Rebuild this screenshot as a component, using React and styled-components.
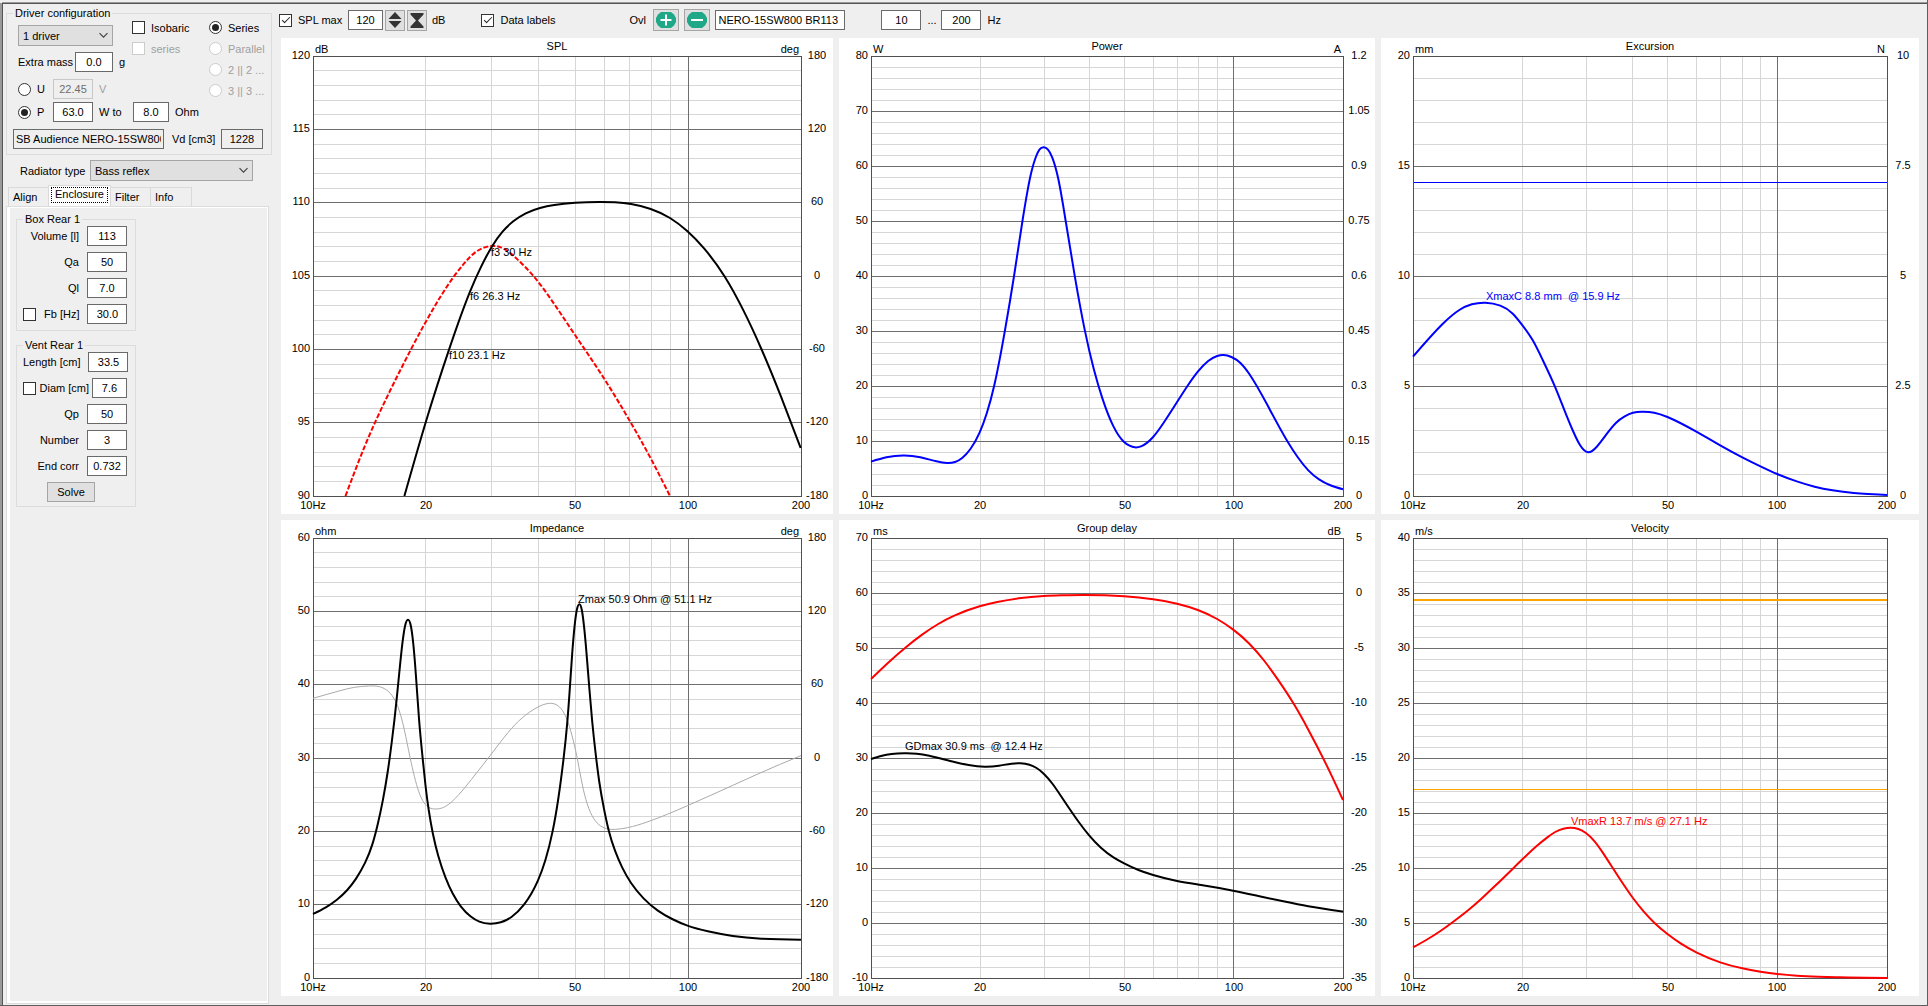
import React, { useLayoutEffect, useRef, useState } from "react";
import styled, { createGlobalStyle, css } from "styled-components";

const FONT = '"Liberation Sans", Arial, sans-serif';
const FONT_SIZE = 11;
const FACE = "#efefef";

const GlobalStyle = createGlobalStyle`
  *, *::before, *::after { box-sizing: border-box; }
  body { margin: 0; background: ${FACE}; }
  body, button, input, select, fieldset {
    font-family: ${FONT};
    font-size: ${FONT_SIZE}px;
    line-height: 14px;
    color: #000;
  }
`;

/* ---------- window ---------- */

const Window = styled.main`
  display: flex;
  height: 100vh;
  min-height: 600px;
  border: solid #5f5f5f;
  border-width: 0 1px 1px 0;
`;

const Frame = styled.div`
  flex: 1;
  min-width: 0;
  display: flex;
  margin-top: 3px;
  border: solid #555;
  border-width: 1px 0 0 1px;
  box-shadow: -2px 0 0 #9a9a9a, 0 -1px 0 #9a9a9a;
  margin-left: 2px;
  padding-top: 1px;
`;

const Sidebar = styled.aside`
  flex: none;
  width: 270px;
  padding: 1px 0 1px 3px;
  display: flex;
  flex-direction: column;
`;

const Workspace = styled.section`
  flex: 1;
  min-width: 0;
  display: flex;
  flex-direction: column;
  padding: 0 8px 9px 6px;
`;

/* ---------- controls ---------- */

const Group = styled.fieldset`
  min-width: 0;
  margin: 0;
  border: 1px solid #dcdcdc;
  padding: ${(p) => p.$pad || "0 8px 6px 6px"};
  display: flex;
  flex-direction: column;
  width: ${(p) => (p.$width ? `${p.$width}px` : "auto")};
`;

const Legend = styled.legend`
  padding: 0 2px;
`;

const Row = styled.div`
  display: flex;
  align-items: center;
  gap: ${(p) => p.$gap ?? 6}px;
  margin-top: ${(p) => p.$top || 0}px;
`;

const Column = styled.div`
  flex: none;
  align-self: flex-start;
  display: flex;
  flex-direction: column;
  width: ${(p) => (p.$width ? `${p.$width}px` : "auto")};
  gap: ${(p) => p.$gap || 0}px;
  padding-top: ${(p) => p.$top || 0}px;
`;

const Field = styled.input`
  flex: none;
  width: ${(p) => p.$width}px;
  height: 20px;
  padding: 0 2px;
  border: 1px solid #6a6a6a;
  border-radius: 0;
  background: ${(p) => (p.readOnly ? FACE : "#fff")};
  text-align: ${(p) => p.$align || "center"};
  &:disabled {
    border-color: #c8c8c8;
    background: ${FACE};
    color: #6d6d6d;
  }
`;

const Text = styled.label`
  flex: none;
  white-space: nowrap;
  color: ${(p) => (p.$dim ? "#a0a0a0" : "#000")};
  width: ${(p) => (p.$width ? `${p.$width}px` : "auto")};
`;

const RowLabel = styled.label`
  flex: 1;
  text-align: right;
  white-space: nowrap;
`;

const tick = css`
  appearance: none;
  flex: none;
  width: 13px;
  height: 13px;
  margin: 0;
  display: grid;
  place-items: center;
  border: 1px solid #333;
  background: #fff;
  &:disabled { border-color: #ccc; }
`;

const Check = styled.input.attrs({ type: "checkbox" })`
  ${tick}
  &:checked::before {
    content: "";
    width: 8px;
    height: 4px;
    margin-bottom: 3px;
    border: solid #222;
    border-width: 0 0 1px 1px;
    transform: rotate(-45deg);
  }
`;

const Radio = styled.input.attrs({ type: "radio" })`
  ${tick}
  border-radius: 50%;
  &:checked::before {
    content: "";
    width: 7px;
    height: 7px;
    border-radius: 50%;
    background: #222;
  }
`;

const Option = styled.label`
  display: flex;
  align-items: center;
  gap: 6px;
  height: 15px;
  white-space: nowrap;
  color: ${(p) => (p.$dim ? "#a0a0a0" : "#000")};
`;

const SelectBox = styled.div`
  display: grid;
  align-items: center;
  width: ${(p) => p.$width}px;
  > * { grid-area: 1 / 1; }
  > svg { justify-self: end; margin-right: 4px; pointer-events: none; }
`;

const Select = styled.select`
  appearance: none;
  width: 100%;
  height: 21px;
  padding: 0 20px 0 4px;
  border: 1px solid #a5a5a5;
  border-radius: 0;
  background: #e0e0e0;
`;

const Button = styled.button`
  flex: none;
  display: grid;
  place-items: center;
  width: ${(p) => p.$width}px;
  height: ${(p) => p.$height || 20}px;
  padding: 0;
  border: 1px solid #a5a5a5;
  border-radius: 0;
  background: #e0e0e0;
`;

const SolveButton = styled(Button)`
  margin: 6px 0 -2px 24px;
`;

/* ---------- tabs ---------- */

const TabStrip = styled.div`
  display: flex;
  align-items: flex-end;
  height: 21px;
  margin-top: 4px;
  padding-left: 3px;
`;

const Tab = styled.button`
  width: ${(p) => p.$width}px;
  height: ${(p) => (p.$active ? 21 : 19)}px;
  padding: ${(p) => (p.$active ? "1px 2px 3px" : "0 0 0 4px")};
  margin-left: -1px;
  border: 1px solid #d9d9d9;
  border-bottom: 0;
  background: ${(p) => (p.$active ? "#fff" : FACE)};
  text-align: left;
  > span { display: block; }
  ${(p) =>
    p.$active &&
    css`
      > span { height: 16px; line-height: 13px; border: 1px dotted #000; padding-left: 3px; }
    `}
`;

const TabPane = styled.div`
  flex: 1;
  width: 263px;
  padding: 5px 9px;
  border: 1px solid #dcdcdc;
  box-shadow: inset 3px 1px 0 #fff, inset -1px -2px 0 #fff;
  display: flex;
  flex-direction: column;
  gap: 7px;
`;

/* ---------- toolbar and charts ---------- */

const Toolbar = styled.div`
  display: flex;
  align-items: center;
  height: 33px;
  padding-bottom: 3px;
`;

const ToolSet = styled.div`
  display: flex;
  align-items: center;
  gap: ${(p) => p.$gap || 5}px;
  margin-right: ${(p) => p.$after || 0}px;
`;

const ChartGrid = styled.div`
  flex: 1;
  min-height: 0;
  margin-left: 2px;
  display: grid;
  grid-template-columns: 552fr 536fr 538fr;
  grid-template-rows: 1fr 1fr;
  gap: 6px;
`;

const ChartPanel = styled.figure`
  min-width: 0;
  min-height: 0;
  margin: 0;
  overflow: hidden;
  background: #fff;
`;

const Plot = styled.svg`
  display: block;
  font-family: ${FONT};
  font-size: ${FONT_SIZE}px;
  text { white-space: pre; }
`;

const DriverInset = styled.div`
  padding-left: 5px;
`;

const RadiatorRow = styled(Row)`
  padding-left: 14px;
`;

const ToolOption = styled(Option)`
  width: ${(p) => p.$width}px;
`;

const UnitText = styled(Text)`
  margin-left: 3px;
`;

/* ---------- chart data ---------- */

/* Curves are stored in sheet units; each sheet names the edges of its plot area. */
const SHEET = {
  a: { x0: 94, x1: 1461, y0: 79, y1: 1399 },
  b: { x0: 117, x1: 1437, y0: 79, y1: 1399 },
  c: { x0: 123, x1: 1453, y0: 79, y1: 1399 },
  d: { x0: 94, x1: 1461, y0: 97, y1: 1417 },
  e: { x0: 117, x1: 1437, y0: 97, y1: 1417 },
  f: { x0: 123, x1: 1453, y0: 97, y1: 1417 },
};

const CHARTS = [
  {
    title: "SPL",
    sheet: SHEET.a,
    unitLeft: "dB",
    unitRight: "deg",
    left: ["120", "115", "110", "105", "100", "95", "90"],
    right: ["180", "120", "60", "0", "-60", "-120", "-180"],
    curves: [
      {
        color: "#f00",
        dash: "5 2",
        points: [185,1399,240,1247,300,1105,370,956,407,882,450,803,489,740,520,698,550,667,575,653,598,649,620,653,650,673,680,703,720,750,760,808,828,916,909,1046,982,1175,1041,1288,1094,1399],
      },
      {
        color: "#000",
        points: [350,1399,410,1177,476,957,535,783,565,711,595,651,625,606,655,575,690,551,730,535,770,526,828,519.5,895,517,940,518,985,523,1040,538,1094,565,1143,605,1190,657,1248,742,1300,843,1350,958,1405,1101,1460,1255],
      },
    ],
    notes: [
      { text: "f3 30 Hz", x: 594, y: 678 },
      { text: "f6 26.3 Hz", x: 535, y: 810 },
      { text: "f10 23.1 Hz", x: 476, y: 987 },
    ],
  },
  {
    title: "Power",
    sheet: SHEET.b,
    unitLeft: "W",
    unitRight: "A",
    left: ["80", "70", "60", "50", "40", "30", "20", "10", "0"],
    right: ["1.2", "1.05", "0.9", "0.75", "0.6", "0.45", "0.3", "0.15", "0"],
    curves: [
      {
        color: "#00f",
        points: [117,1296,160,1283,210,1277.5,255,1283,300,1295,330,1300,352,1297,372,1285,395,1258,421,1208,441,1150,462,1066,492,900,517,739,541,571,555,482,566,425,578,382,588,360,600,353,612,360,624,384,641,449,661,571,687,740,715,902,740,1018,765,1109,795,1190,824,1236,840,1248,855,1253,872,1250,906,1222,935,1180,973,1117,1002,1069,1031,1026,1060,994,1085,979,1103,976,1125,982,1150,1000,1175,1033,1226,1127,1281,1234,1310,1282,1340,1322,1370,1349,1400,1366,1437,1379],
      },
    ],
  },
  {
    title: "Excursion",
    sheet: SHEET.c,
    unitLeft: "mm",
    unitRight: "N",
    left: ["20", "15", "10", "5", "0"],
    right: ["10", "7.5", "5", "2.5", "0"],
    limits: [{ y: 458, color: "#00f", width: 1 }],
    curves: [
      {
        color: "#00f",
        points: [123,981,206,883,253,841,288,824,326,819,368,828,403,852,428,884,459,932,487,991,521,1070,548,1142,572,1204,592,1247,614,1268,638,1252,665,1215,693,1179,717,1160,740,1149,768,1146,800,1149,837,1162,918,1206,985,1247,1047,1283,1098,1310,1145,1333,1200,1355,1250,1371,1300,1382,1360,1390,1400,1393,1453,1396],
      },
    ],
    notes: [{ text: "XmaxC 8.8 mm  @ 15.9 Hz", x: 329, y: 810, color: "#00f" }],
  },
  {
    title: "Impedance",
    sheet: SHEET.d,
    unitLeft: "ohm",
    unitRight: "deg",
    left: ["60", "50", "40", "30", "20", "10", "0"],
    right: ["180", "120", "60", "0", "-60", "-120", "-180"],
    curves: [
      {
        color: "#aaa",
        width: 1,
        points: [94,578,130,567,170,555,210,545,250,541,280,543,300,553,320,577,335,613,350,673,366,756,378,812,390,857,405,891,420,906,438,910,460,905,485,886,520,845,555,798,590,750,620,708,660,657,700,620,730,601,757,593,780,600,797,622,810,655,823,704,836,768,848,835,862,894,880,938,900,961,920,970,942,971,975,966,1030,949,1143,900,1270,839,1400,777,1461,750],
      },
      {
        color: "#000",
        points: [94,1225,130,1205,160,1183,190,1153,215,1118,240,1071,260,1017,275,957,290,882,304,793,315,706,328,584,337,487,345,408,352,360,360,342,368,360,375,415,383,520,391,640,401,756,409,838,418,912,430,985,445,1051,465,1115,485,1163,508,1202,535,1232,560,1248,590,1254,620,1250,650,1234,685,1197,705,1165,724,1125,745,1063,765,978,781,880,796,758,806,654,813,555,820,445,827,359,833,313,840,296,847,313,853,360,860,440,868,547,876,646,886,746,896,829,909,909,922,973,940,1035,960,1085,985,1132,1020,1178,1060,1215,1100,1240,1143,1260,1200,1277,1270,1291,1350,1299,1400,1301,1461,1302],
      },
    ],
    notes: [{ text: "Zmax 50.9 Ohm @ 51.1 Hz", x: 837, y: 291 }],
  },
  {
    title: "Group delay",
    sheet: SHEET.e,
    unitLeft: "ms",
    unitRight: "dB",
    left: ["70", "60", "50", "40", "30", "20", "10", "0", "-10"],
    right: ["5", "0", "-5", "-10", "-15", "-20", "-25", "-30", "-35"],
    curves: [
      {
        color: "#f00",
        points: [117,520,165,471,213,426,260,387,305,355,350,330,421,302,470,289,530,278,600,271,650,269,710,268,770,269,825,272,906,281,973,294,1031,313,1085,340,1130,372,1175,414,1215,463,1255,522,1300,596,1340,672,1390,776,1437,883],
      },
      {
        color: "#000",
        points: [117,760,145,751,175,745,210,743,245,744,280,750,350,769,390,778,435,783,475,780,510,774,535,773,560,777,580,787,600,804,625,835,650,874,700,952,727,989,760,1026,795,1055,825,1073,865,1093,906,1108,973,1126,1040,1138,1130,1155,1200,1171,1270,1187,1340,1202,1437,1218],
      },
    ],
    notes: [{ text: "GDmax 30.9 ms  @ 12.4 Hz", x: 213, y: 734 }],
  },
  {
    title: "Velocity",
    sheet: SHEET.f,
    unitLeft: "m/s",
    left: ["40", "35", "30", "25", "20", "15", "10", "5", "0"],
    limits: [
      { y: 283, color: "#ffa500", width: 2 },
      { y: 850, color: "#ffa500", width: 1 },
    ],
    curves: [
      {
        color: "#f00",
        points: [123,1325,160,1303,200,1276,235,1249,275,1216,315,1179,355,1139,430,1061,470,1021,500,995,522,979,545,969,565,966,587,970,608,982,630,1004,655,1040,684,1088,738,1174,770,1217,800,1251,837,1285,875,1314,918,1340,985,1370,1047,1388,1098,1398,1145,1405,1200,1410,1260,1413,1320,1415,1453,1417],
      },
    ],
    notes: [{ text: "VmaxR 13.7 m/s @ 27.1 Hz", x: 565, y: 957, color: "#f00" }],
  },
];

/* Natural cubic spline through x-sorted points, as Bezier pieces. */
function smoothPath(pts) {
  const n = pts.length;
  const h = [];
  const s = [];
  for (let i = 0; i < n - 1; i++) {
    h.push(pts[i + 1][0] - pts[i][0]);
    s.push((pts[i + 1][1] - pts[i][1]) / h[i]);
  }
  const c = [0];
  const r = [0];
  for (let i = 1; i < n - 1; i++) {
    const m = 2 * (h[i - 1] + h[i]) - h[i - 1] * c[i - 1];
    c.push(h[i] / m);
    r.push((6 * (s[i] - s[i - 1]) - h[i - 1] * r[i - 1]) / m);
  }
  const bend = new Array(n).fill(0);
  for (let i = n - 2; i > 0; i--) bend[i] = r[i] - c[i] * bend[i + 1];

  let d = `M${pts[0][0].toFixed(2)} ${pts[0][1].toFixed(2)}`;
  for (let i = 0; i < n - 1; i++) {
    const [xa, ya] = pts[i];
    const [xb, yb] = pts[i + 1];
    const ta = s[i] - (h[i] * (2 * bend[i] + bend[i + 1])) / 6;
    const tb = s[i] + (h[i] * (bend[i] + 2 * bend[i + 1])) / 6;
    const k = h[i] / 3;
    d += `C${[xa + k, ya + ta * k, xb - k, yb - tb * k, xb, yb].map((v) => v.toFixed(2)).join(" ")}`;
  }
  return d;
}

const FREQ_LINES = [20, 30, 40, 50, 60, 70, 80, 90, 100];
const FREQ_LABELS = [[10, "10Hz"], [20, "20"], [50, "50"], [100, "100"], [200, "200"]];

function Chart({ title, sheet, unitLeft, unitRight, left, right = [], curves, limits = [], notes = [] }) {
  const box = useRef(null);
  const [size, setSize] = useState({ w: 540, h: 470 });

  useLayoutEffect(() => {
    const el = box.current;
    const measure = () => setSize({ w: el.clientWidth, h: el.clientHeight });
    measure();
    const observer = new ResizeObserver(measure);
    observer.observe(el);
    return () => observer.disconnect();
  }, []);

  const L = 32;
  const T = 18;
  const R = size.w - 32;
  const B = size.h - 18;
  const fx = (hz) => L + ((R - L) * Math.log(hz / 10)) / Math.log(20);
  const sx = (x) => L + ((x - sheet.x0) / (sheet.x1 - sheet.x0)) * (R - L);
  const sy = (y) => T + ((y - sheet.y0) / (sheet.y1 - sheet.y0)) * (B - T);
  const crisp = (v) => Math.floor(v) + 0.5;
  const majors = left.length - 1;
  const lines = Array.from({ length: majors * 5 - 1 }, (_, i) => i + 1);
  const rowY = (i) => T + ((B - T) * i) / majors;

  return (
    <ChartPanel ref={box}>
      <Plot width={size.w} height={size.h} role="img" aria-label={title}>
        <g shapeRendering="crispEdges" fill="none" strokeWidth="1">
          {lines.filter((i) => i % 5).map((i) => (
            <line key={i} x1={L} x2={R} y1={crisp(rowY(i / 5))} y2={crisp(rowY(i / 5))} stroke="#d6d6d6" />
          ))}
          {FREQ_LINES.map((hz) => (
            <line key={hz} y1={T} y2={B} x1={crisp(fx(hz))} x2={crisp(fx(hz))} stroke={hz === 100 ? "#6e6e6e" : "#d6d6d6"} />
          ))}
          {lines.filter((i) => i % 5 === 0).map((i) => (
            <line key={i} x1={L} x2={R} y1={crisp(rowY(i / 5))} y2={crisp(rowY(i / 5))} stroke="#6e6e6e" />
          ))}
          <rect x={L + 0.5} y={T + 0.5} width={Math.max(0, R - L)} height={Math.max(0, B - T)} stroke="#505050" />
          {limits.map((l) => (
            <line key={l.y} x1={L + 1} x2={R} y1={Math.round(sy(l.y)) + (l.width % 2) / 2} y2={Math.round(sy(l.y)) + (l.width % 2) / 2} stroke={l.color} strokeWidth={l.width} />
          ))}
        </g>
        {curves.map((c, k) => {
          const pts = [];
          for (let i = 0; i < c.points.length; i += 2) pts.push([sx(c.points[i]), sy(c.points[i + 1])]);
          return <path key={k} d={smoothPath(pts)} fill="none" stroke={c.color} strokeWidth={c.width || 2} strokeDasharray={c.dash} />;
        })}
        <text x={(L + R) / 2} y={12} textAnchor="middle">{title}</text>
        <text x={L + 2} y={T - 3}>{unitLeft}</text>
        {unitRight && <text x={R - 2} y={T - 3} textAnchor="end">{unitRight}</text>}
        {left.map((t, i) => (
          <text key={i} x={L - 3} y={Math.floor(rowY(i)) + 3} textAnchor="end">{t}</text>
        ))}
        {right.map((t, i) => (
          <text key={i} x={R + 16} y={Math.floor(rowY(i)) + 3} textAnchor="middle">{t}</text>
        ))}
        {FREQ_LABELS.map(([hz, t]) => (
          <text key={hz} x={Math.round(fx(hz))} y={B + 13} textAnchor="middle">{t}</text>
        ))}
        {notes.map((n) => (
          <text key={n.text} x={Math.round(sx(n.x))} y={Math.round(sy(n.y))} fill={n.color || "#000"}>{n.text}</text>
        ))}
      </Plot>
    </ChartPanel>
  );
}

/* ---------- icons ---------- */

const Chevron = () => (
  <svg width="11" height="7" viewBox="0 0 11 7" aria-hidden="true">
    <path d="M1.5 1.2 5.5 5.2 9.5 1.2" fill="none" stroke="#444" strokeWidth="1.2" />
  </svg>
);

const SpreadIcon = () => (
  <svg width="14" height="16" viewBox="0 0 14 16" aria-hidden="true">
    <path d="M7 0 13.5 7H.5zM.5 9h13L7 16z" fill="#333" />
  </svg>
);

const PinchIcon = () => (
  <svg width="14" height="15" viewBox="0 0 14 15" aria-hidden="true">
    <path d="M.5 0h13v1.5L8 7.5l5.5 6V15H.5v-1.5l5.5-6-5.5-6z" fill="#333" />
  </svg>
);

const RoundIcon = ({ plus }) => (
  <svg width="20" height="16" viewBox="0 0 20 16" aria-hidden="true">
    <path d="M5 0h10l3 2.500 2 3.500v4l-2 3.500L15 16H5l-3-2.500L0 10V6l2-3.500z" fill="#1fa888" />
    <path d={plus ? "M4.500 8h11M10 2.500v11" : "M4 8h12"} stroke="#fff" strokeWidth="2" />
  </svg>
);

/* ---------- panels ---------- */

function DriverPanel() {
  return (
    <Group $pad="0 8px 5px 6px" $width={266}>
      <Legend>Driver configuration</Legend>
      <Row $gap={0}>
        <Column $width={119} $top={5}>
          <DriverInset>
            <SelectBox $width={95}>
              <Select aria-label="Driver count" defaultValue="1">
                <option value="1">1 driver</option>
                <option value="2">2 drivers</option>
              </Select>
              <Chevron />
            </SelectBox>
            <Row $top={6}>
              <Text htmlFor="mass" $width={51}>Extra mass</Text>
              <Field id="mass" $width={38} defaultValue="0.0" />
              <Text as="span">g</Text>
            </Row>
            <Row $top={7}>
              <Radio name="drive" id="drive-u" />
              <Text htmlFor="drive-u" $width={10}>U</Text>
              <Field aria-label="Voltage" $width={40} defaultValue="22.45" disabled />
              <Text as="span" $dim>V</Text>
            </Row>
          </DriverInset>
        </Column>
        <Column $width={77} $gap={6}>
          <Option><Check />Isobaric</Option>
          <Option $dim><Check disabled />series</Option>
        </Column>
        <Column $gap={6}>
          <Option><Radio name="wiring" defaultChecked />Series</Option>
          <Option $dim><Radio name="wiring" disabled />Parallel</Option>
          <Option $dim><Radio name="wiring" disabled />2 || 2 ...</Option>
          <Option $dim><Radio name="wiring" disabled />3 || 3 ...</Option>
        </Column>
      </Row>
      <DriverInset>
        <Row $top={3}>
          <Radio name="drive" id="drive-p" defaultChecked />
          <Text htmlFor="drive-p" $width={10}>P</Text>
          <Field id="power" aria-label="Power" $width={40} defaultValue="63.0" />
          <Text htmlFor="load" $width={28}>W to</Text>
          <Field id="load" $width={36} defaultValue="8.0" />
          <Text as="span">Ohm</Text>
        </Row>
      </DriverInset>
      <Row $top={7} $gap={8}>
        <Field aria-label="Driver name" $width={151} $align="left" defaultValue="SB Audience NERO-15SW800" readOnly />
        <Text htmlFor="vd" $width={41}>Vd [cm3]</Text>
        <Field id="vd" $width={42} defaultValue="1228" readOnly />
      </Row>
    </Group>
  );
}

function NumberRow({ id, label, value, width = 40, top, gap = 8, check }) {
  return (
    <Row $gap={gap} $top={top}>
      {check && <Check aria-label={check} />}
      <RowLabel htmlFor={id}>{label}</RowLabel>
      <Field id={id} $width={width} defaultValue={value} />
    </Row>
  );
}

function EnclosurePanel() {
  return (
    <TabPane role="tabpanel">
      <Group $width={120}>
        <Legend>Box Rear 1</Legend>
        <NumberRow id="volume" label="Volume [l]" value="113" />
        <NumberRow id="qa" label="Qa" value="50" top={6} />
        <NumberRow id="ql" label="Ql" value="7.0" top={6} />
        <NumberRow id="fb" label="Fb [Hz]" value="30.0" top={6} check="Set Fb" />
      </Group>
      <Group $width={120}>
        <Legend>Vent Rear 1</Legend>
        <NumberRow id="length" label="Length [cm]" value="33.5" />
        <NumberRow id="diam" label="Diam [cm]" value="7.6" width={35} top={6} gap={3} check="Set diameter" />
        <NumberRow id="qp" label="Qp" value="50" top={6} />
        <NumberRow id="number" label="Number" value="3" top={6} />
        <NumberRow id="endcorr" label="End corr" value="0.732" top={6} />
        <SolveButton $width={48}>Solve</SolveButton>
      </Group>
    </TabPane>
  );
}

export default function App() {
  return (
    <Window>
      <GlobalStyle />
      <Frame>
        <Sidebar>
          <DriverPanel />
          <RadiatorRow $top={5} $gap={8}>
            <Text htmlFor="radiator" $width={62}>Radiator type</Text>
            <SelectBox $width={163}>
              <Select id="radiator" defaultValue="br">
                <option value="br">Bass reflex</option>
                <option value="cb">Closed box</option>
              </Select>
              <Chevron />
            </SelectBox>
          </RadiatorRow>
          <TabStrip role="tablist">
            <Tab role="tab" $width={41}><span>Align</span></Tab>
            <Tab role="tab" aria-selected="true" $width={63} $active><span>Enclosure</span></Tab>
            <Tab role="tab" $width={41}><span>Filter</span></Tab>
            <Tab role="tab" $width={42}><span>Info</span></Tab>
          </TabStrip>
          <EnclosurePanel />
        </Sidebar>
        <Workspace>
          <Toolbar>
            <ToolSet $gap={2} $after={36}>
              <ToolOption $width={67}><Check defaultChecked />SPL max</ToolOption>
              <Field aria-label="SPL max value" $width={35} defaultValue="120" />
              <Button aria-label="Expand range" $width={20} $height={21}><SpreadIcon /></Button>
              <Button aria-label="Compress range" $width={20} $height={21}><PinchIcon /></Button>
              <UnitText as="span">dB</UnitText>
            </ToolSet>
            <ToolSet>
              <ToolOption $width={148}><Check defaultChecked />Data labels</ToolOption>
            </ToolSet>
            <ToolSet $after={36}>
              <Text htmlFor="overlay" $width={19}>Ovl</Text>
              <Button aria-label="Add overlay" $width={26} $height={22}><RoundIcon plus /></Button>
              <Button aria-label="Remove overlay" $width={26} $height={22}><RoundIcon /></Button>
              <Field id="overlay" $width={130} $align="left" defaultValue="NERO-15SW800 BR113" />
            </ToolSet>
            <ToolSet $gap={6}>
              <Field aria-label="Lowest frequency" $width={40} defaultValue="10" />
              <Text as="span" $width={8}>...</Text>
              <Field aria-label="Highest frequency" $width={40} defaultValue="200" />
              <Text as="span">Hz</Text>
            </ToolSet>
          </Toolbar>
          <ChartGrid>
            {CHARTS.map((c) => (
              <Chart key={c.title} {...c} />
            ))}
          </ChartGrid>
        </Workspace>
      </Frame>
    </Window>
  );
}
